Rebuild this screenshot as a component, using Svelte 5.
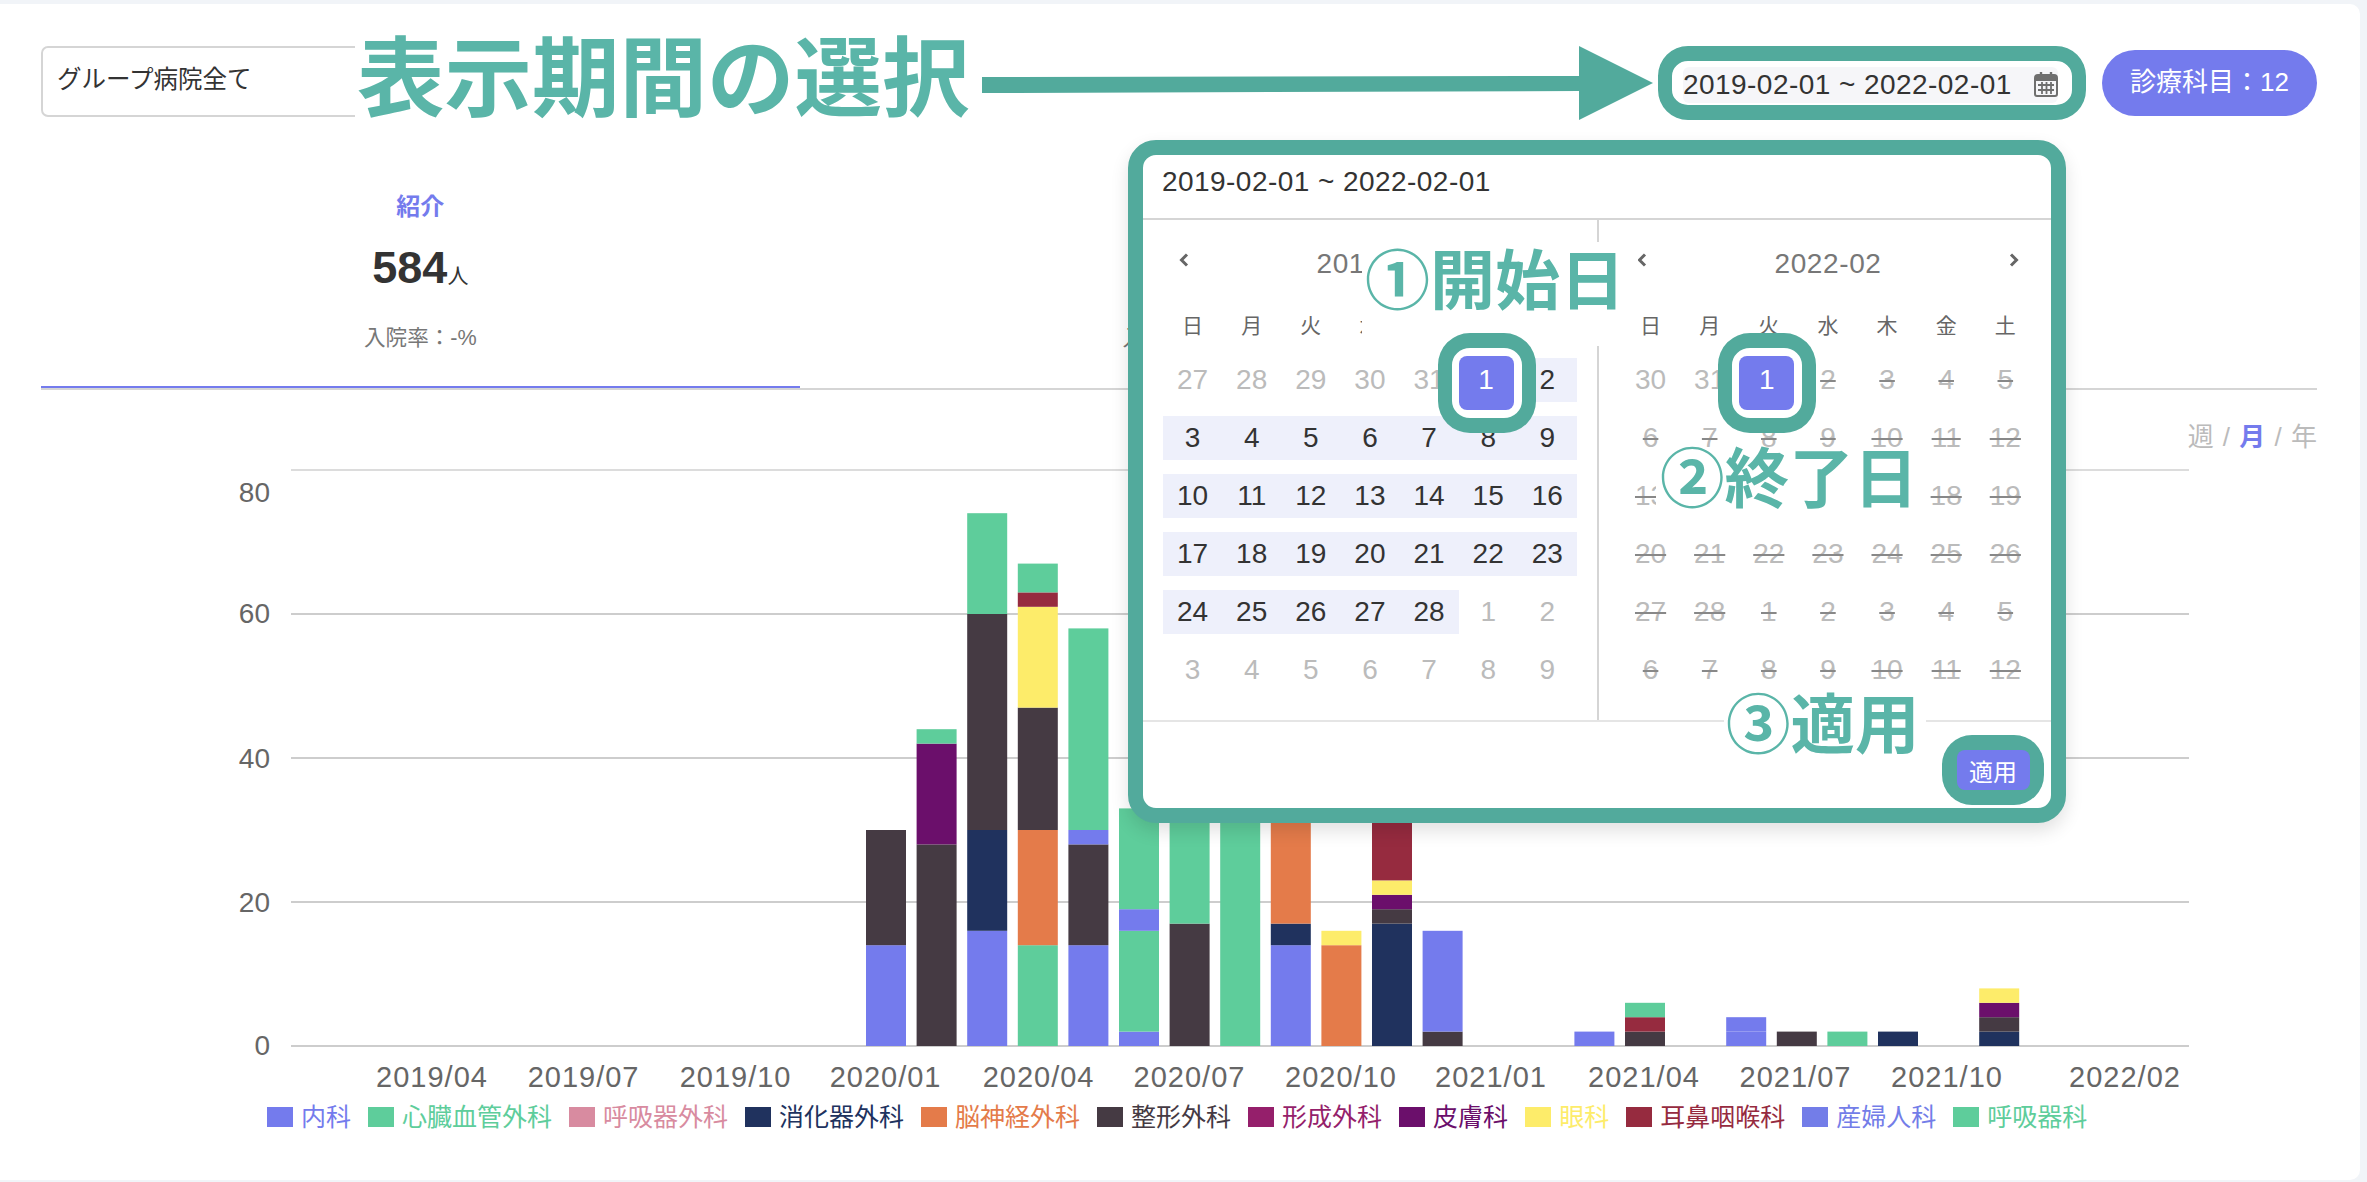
<script>
  const C = {
    naika: '#747bed', shinzo: '#5ecd9b', kokyuge: '#d88ba0', shoka: '#20325e', nou: '#e47b4a',
    seikei: '#453a43', keisei: '#951f6b', hifu: '#6b0f6b', gan: '#fdec6a', jibi: '#962b3f',
    sanfu: '#737de8', kokyu: '#5ecd9b'
  };
  const legend = [
    ['内科', C.naika], ['心臓血管外科', C.shinzo], ['呼吸器外科', C.kokyuge], ['消化器外科', C.shoka],
    ['脳神経外科', C.nou], ['整形外科', C.seikei], ['形成外科', C.keisei], ['皮膚科', C.hifu],
    ['眼科', C.gan], ['耳鼻咽喉科', C.jibi], ['産婦人科', C.sanfu], ['呼吸器科', C.kokyu]
  ];
  const B = 1046, U = 7.2, W = 40, X0 = 886, P = 50.6;
  const stacks = [
    [0, [[C.naika, 14], [C.seikei, 16]]],
    [1, [[C.seikei, 28], [C.hifu, 14], [C.shinzo, 2]]],
    [2, [[C.naika, 16], [C.shoka, 14], [C.seikei, 30], [C.shinzo, 14]]],
    [3, [[C.shinzo, 14], [C.nou, 16], [C.seikei, 17], [C.gan, 14], [C.jibi, 2], [C.shinzo, 4]]],
    [4, [[C.naika, 14], [C.seikei, 14], [C.naika, 2], [C.shinzo, 28]]],
    [5, [[C.naika, 2], [C.shinzo, 14], [C.naika, 3], [C.shinzo, 14]]],
    [6, [[C.seikei, 17], [C.shinzo, 20]]],
    [7, [[C.shinzo, 40]]],
    [8, [[C.naika, 14], [C.shoka, 3], [C.nou, 20]]],
    [9, [[C.nou, 14], [C.gan, 2]]],
    [10, [[C.shoka, 17], [C.seikei, 2], [C.hifu, 2], [C.gan, 2], [C.jibi, 10]]],
    [11, [[C.seikei, 2], [C.naika, 14]]],
    [14, [[C.naika, 2]]],
    [15, [[C.seikei, 2], [C.jibi, 2], [C.shinzo, 2]]],
    [17, [[C.naika, 2], [C.naika, 2]]],
    [18, [[C.seikei, 2]]],
    [19, [[C.shinzo, 2]]],
    [20, [[C.shoka, 2]]],
    [22, [[C.shoka, 2], [C.seikei, 2], [C.hifu, 2], [C.gan, 2]]]
  ];
  const bars = [];
  for (const [i, segs] of stacks) {
    let acc = 0;
    for (const [fill, v] of segs) {
      acc += v;
      bars.push({ x: X0 + P * i - W / 2, y: B - acc * U, h: v * U, fill });
    }
  }
  const gridLines = [80, 60, 40, 20, 0];
  const yLabels = [[80, 502], [60, 623], [40, 768], [20, 912], [0, 1055]];
  const xLabels = [
    ['2019/04', 432], ['2019/07', 583.6], ['2019/10', 735.6], ['2020/01', 885.6], ['2020/04', 1038.6],
    ['2020/07', 1189.5], ['2020/10', 1341], ['2021/01', 1491], ['2021/04', 1644], ['2021/07', 1795.5],
    ['2021/10', 1947], ['2022/02', 2125]
  ];
  const week = ['日', '月', '火', '水', '木', '金', '土'];
  const range = (a, b) => Array.from({ length: b - a + 1 }, (_, i) => a + i);
  const leftDays = [
    ...[27, 28, 29, 30, 31].map((d) => ({ d, off: true })),
    { d: 1, sel: true, on: true }, { d: 2, on: true },
    ...range(3, 28).map((d) => ({ d, on: true })),
    ...[1, 2, 3, 4, 5, 6, 7, 8, 9].map((d) => ({ d, off: true }))
  ];
  const rightDays = [
    { d: 30, off: true }, { d: 31, off: true }, { d: 1, sel: true },
    ...range(2, 28).map((d) => ({ d, off: true, strike: true })),
    ...range(1, 12).map((d) => ({ d, off: true, strike: true }))
  ];
  const panels = [
    { title: '2019-02', days: leftDays, next: false },
    { title: '2022-02', days: rightDays, next: true }
  ];
</script>

<div class="card">
  <div class="top">
    <div class="select">グループ病院全て</div>
    <div class="top-right">
      <div class="date-frame">
        <div class="date-input">
          <span>2019-02-01 ~ 2022-02-01</span>
          <svg class="cal" viewBox="0 0 24 26" width="24" height="26" aria-hidden="true">
            <path d="M7 1v5M17 1v5" stroke="#6f6f6f" stroke-width="2.4" fill="none"/>
            <path d="M1 7a3 3 0 0 1 3-3h16a3 3 0 0 1 3 3v16a2 2 0 0 1-2 2H3a2 2 0 0 1-2-2z" fill="none" stroke="#6f6f6f" stroke-width="2"/>
            <path d="M1 5h22v5H1z" fill="#6f6f6f"/>
            <path d="M4 14h16M4 19h16M8 11v12M12.5 11v12M17 11v12" stroke="#6f6f6f" stroke-width="1.8" fill="none"/>
          </svg>
        </div>
      </div>
      <div class="pill">診療科目：12</div>
    </div>
  </div>

  <div class="tabs">
    <div class="tab active">
      <div class="tab-name">紹介</div>
      <div class="tab-num"><b>584</b><span>人</span></div>
      <div class="tab-rate">入院率：-%</div>
    </div>
    <div class="tab">
      <div class="tab-name"></div>
      <div class="tab-num"></div>
      <div class="tab-rate">入院率：-%</div>
    </div>
    <div class="tab"></div>
  </div>

  <div class="toggle">週 / <b>月</b> / 年</div>

  <svg class="chart" viewBox="0 455 2360 640" width="2360" height="640" role="img">
    {#each gridLines as t}
      <line x1="291" x2="2189" y1={B - t * U} y2={B - t * U} stroke={t === 80 ? '#dcdcdc' : '#cdcdcd'} stroke-width="2" />
    {/each}
    {#each yLabels as [t, y]}
      <text class="axis" x="270" {y} text-anchor="end">{t}</text>
    {/each}
    {#each bars as b}
      <rect x={b.x} y={b.y} width={W} height={b.h} fill={b.fill} />
    {/each}
    {#each xLabels as [label, x]}
      <text class="axis xl" {x} y="1087" text-anchor="middle">{label}</text>
    {/each}
  </svg>

  <div class="legend">
    {#each legend as [name, color]}
      <div class="legend-item" style="color:{color}">
        <i style="background:{color}"></i>{name}
      </div>
    {/each}
  </div>

  <!-- annotation overlays -->
  <div class="heading">表示期間の選択</div>
  <svg class="arrow" viewBox="982 40 680 86" width="680" height="86" aria-hidden="true">
    <polygon points="982,77 1579,76 1579,46 1653,83 1579,120 1579,91 982,93" fill="#52aa9c" />
  </svg>

  <div class="popup">
    <div class="popup-head">2019-02-01 ~ 2022-02-01</div>
    <div class="popup-body">
      {#each panels as p, pi}
        <div class="panel" class:first={pi === 0}>
          <div class="title-row">
            <svg class="chev" viewBox="0 0 10 14" width="10" height="14" aria-hidden="true">
              <path d="M8 1.5 2.5 7 8 12.5" fill="none" stroke="#666" stroke-width="3" />
            </svg>
            <span class="month">{p.title}</span>
            <svg class="chev" class:hide={!p.next} viewBox="0 0 10 14" width="10" height="14" aria-hidden="true">
              <path d="M2 1.5 7.5 7 2 12.5" fill="none" stroke="#666" stroke-width="3" />
            </svg>
          </div>
          <div class="week">
            {#each week as w}<span>{w}</span>{/each}
          </div>
          <div class="days">
            {#each p.days as day}
              <div class="day" class:on={day.on} class:off={day.off} class:strike={day.strike}>
                {#if day.sel}
                  <div class="ring"><div class="sel">{day.d}</div></div>
                {:else}
                  <span>{day.d}</span>
                {/if}
              </div>
            {/each}
          </div>
        </div>
      {/each}
    </div>
    <div class="popup-foot">
      <div class="apply-frame"><button class="apply">適用</button></div>
    </div>

    <div class="callout c1">①開始日</div>
    <div class="callout c2">②終了日</div>
    <div class="callout c3">③適用</div>
  </div>
</div>

<style>
  :global(body) {
    margin: 0;
    background: #f1f4f8;
  }
  .card {
    position: relative;
    box-sizing: border-box;
    width: 2360px;
    height: 1176px;
    margin-top: 4px;
    background: #fff;
    border-top-right-radius: 10px;
    border-bottom-right-radius: 10px;
    font-family: "Liberation Sans", "Noto Sans CJK JP", sans-serif;
    color: #333;
    overflow: hidden;
  }
  .top {
    display: flex;
    justify-content: space-between;
    align-items: flex-start;
    padding: 42px 43px 0 41px;
    height: 74px;
  }
  .select {
    box-sizing: border-box;
    width: 400px;
    height: 71px;
    border: 2px solid #d5d5d5;
    border-radius: 7px;
    padding-left: 14px;
    font-size: 24.5px;
    line-height: 64px;
  }
  .top-right {
    display: flex;
    align-items: center;
    gap: 16px;
    height: 74px;
  }
  .date-frame {
    box-sizing: border-box;
    width: 428px;
    height: 74px;
    border: solid #52aa9c;
    border-width: 15px 14px;
    border-radius: 30px;
    background: #fff;
    padding: 6px 14px 0 11px;
  }
  .date-input {
    display: flex;
    justify-content: space-between;
    align-items: center;
    height: 36px;
    background: #f6f6f9;
    border-radius: 6px;
    font-size: 28px;
    letter-spacing: 0.45px;
    white-space: nowrap;
  }
  .cal {
    flex: none;
    margin-top: -3px;
  }
  .pill {
    display: flex;
    align-items: center;
    justify-content: center;
    width: 215px;
    height: 66px;
    border-radius: 33px;
    background: #747bed;
    color: #fff;
    font-size: 26px;
    white-space: nowrap;
    padding-bottom: 7px;
    box-sizing: border-box;
  }
  .tabs {
    display: flex;
    margin: 69px 43px 0 41px;
    border-bottom: 2px solid #d5d5d5;
  }
  .tab {
    flex: 1;
    height: 197px;
    text-align: center;
  }
  .tab.active {
    border-bottom: 2px solid #747bed;
  }
  .tab-name {
    height: 36px;
    font-size: 24px;
    line-height: 36px;
    font-weight: 700;
    color: #747bed;
  }
  .tab-num {
    height: 60px;
    margin-top: 13px;
    line-height: 60px;
    font-size: 21px;
  }
  .tab-num b {
    font-size: 45px;
    font-weight: 700;
  }
  .tab-rate {
    margin-top: 22px;
    height: 36px;
    line-height: 36px;
    font-size: 21.6px;
    color: #777;
  }
  .toggle {
    margin: 29px 43px 0 0;
    height: 36px;
    line-height: 36px;
    text-align: right;
    font-size: 26px;
    word-spacing: 2px;
    color: #bbb;
  }
  .toggle b {
    color: #747bed;
  }
  .chart {
    display: block;
  }
  .axis {
    font-size: 28px;
    fill: #666;
    font-family: "Liberation Sans", "Noto Sans CJK JP", sans-serif;
  }
  .xl {
    font-size: 29px;
    letter-spacing: 1px;
  }
  .legend {
    display: flex;
    gap: 17px;
    margin-top: 4px;
    padding-left: 267px;
    height: 36px;
    line-height: 36px;
    font-size: 25px;
  }
  .legend-item {
    display: flex;
    align-items: center;
    white-space: nowrap;
  }
  .legend-item i {
    width: 26px;
    height: 20px;
    margin-right: 8px;
  }
  .heading {
    position: absolute;
    left: 355px;
    top: 36px;
    width: 620px;
    height: 80px;
    padding-left: 2px;
    box-sizing: border-box;
    background: #fff;
    color: #5ab5a8;
    font-size: 87.5px;
    font-weight: 700;
    line-height: 80px;
    white-space: nowrap;
  }
  .arrow {
    position: absolute;
    left: 982px;
    top: 36px;
  }
  .popup {
    position: absolute;
    left: 1128px;
    top: 136px;
    box-sizing: border-box;
    width: 938px;
    height: 683px;
    border: solid #52aa9c;
    border-width: 15px;
    border-radius: 28px;
    background: #fff;
    box-shadow: 0 8px 18px rgba(0, 0, 0, 0.12);
    z-index: 3;
  }
  .popup-head {
    box-sizing: border-box;
    height: 65px;
    padding: 9px 0 0 19px;
    line-height: 36px;
    font-size: 28px;
    letter-spacing: 0.45px;
    border-bottom: 2px solid #d5d5d5;
    white-space: nowrap;
  }
  .popup-body {
    display: flex;
    height: 502px;
    border-bottom: 2px solid #e5e5e5;
    box-sizing: border-box;
  }
  .panel {
    box-sizing: border-box;
    padding: 22px 0 0 22px;
    flex: 1;
  }
  .panel.first {
    flex: none;
    width: 456px;
    padding-left: 20px;
    border-right: 2px solid #d5d5d5;
  }
  .title-row {
    display: flex;
    justify-content: space-between;
    align-items: flex-start;
    width: 414px;
    height: 44px;
    padding: 0 16px;
    box-sizing: border-box;
  }
  .chev {
    flex: none;
    margin-top: 11px;
  }
  .chev.hide {
    visibility: hidden;
  }
  .month {
    font-size: 28px;
    letter-spacing: 0.6px;
    line-height: 44px;
    color: #777;
  }
  .week {
    display: grid;
    grid-template-columns: repeat(7, 59.14px);
    margin-top: 18px;
    height: 44px;
    line-height: 44px;
    text-align: center;
    font-size: 21px;
    color: #666;
  }
  .days {
    display: grid;
    grid-template-columns: repeat(7, 59.14px);
    grid-auto-rows: 44px;
    row-gap: 14px;
    margin-top: 10px;
  }
  .day {
    position: relative;
    text-align: center;
    font-size: 28px;
    line-height: 44px;
    color: #333;
  }
  .day.on {
    background: #eef0fb;
  }
  .day.off {
    color: #bbb;
  }
  .day.strike span {
    text-decoration: line-through;
    text-decoration-color: #888;
    text-decoration-thickness: 2px;
  }
  .ring {
    position: absolute;
    left: -21px;
    top: -25px;
    box-sizing: border-box;
    width: 98px;
    height: 100px;
    border: solid #52aa9c;
    border-width: 15px 14px;
    border-radius: 32px;
    background: #fff;
    z-index: 2;
  }
  .sel {
    box-sizing: border-box;
    width: 55px;
    height: 54px;
    margin: 8px 0 0 7px;
    border-radius: 8px;
    background: #747bed;
    color: #fff;
    line-height: 48px;
  }
  .popup-foot {
    display: flex;
    justify-content: flex-end;
    padding: 13px 7px 0 0;
  }
  .apply-frame {
    display: flex;
    align-items: center;
    justify-content: center;
    width: 102px;
    height: 70px;
    border-radius: 30px;
    background: #52aa9c;
  }
  .apply {
    width: 73px;
    height: 40px;
    padding: 0;
    border: 0;
    border-radius: 8px;
    background: #747bed;
    color: #fff;
    font-family: inherit;
    font-size: 24px;
  }
  .callout {
    position: absolute;
    box-sizing: border-box;
    background: #fff;
    color: #5ab5a8;
    font-family: "Noto Sans CJK JP", sans-serif;
    font-weight: 700;
    font-size: 64.5px;
    white-space: nowrap;
    padding-left: 4px;
    z-index: 1;
  }
  .c1 {
    left: 219px;
    top: 87px;
    width: 276px;
    height: 104px;
    font-size: 65px;
    line-height: 68px;
    padding-left: 3px;
  }
  .c2 {
    left: 513px;
    top: 292px;
    width: 269px;
    height: 65px;
    line-height: 55px;
  }
  .c3 {
    left: 581px;
    top: 535px;
    width: 202px;
    height: 67px;
    line-height: 61px;
    padding-left: 2px;
  }
</style>
